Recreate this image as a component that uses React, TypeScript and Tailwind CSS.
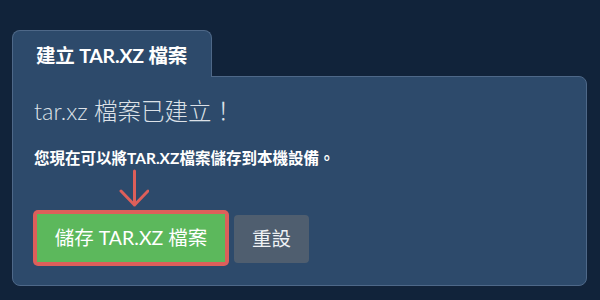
import React from "react";

export default function App() {
  const font = { fontFamily: 'Lato, "Noto Sans CJK TC", sans-serif' };
  return (
    <div
      className="w-[600px] h-[300px] bg-[#11233a] pt-[30px] pl-[12px] pr-[13px] box-border"
      style={font}
    >
      <div className="relative z-10 w-[200px] h-[47px] -mb-px bg-[#2d4a6b] border border-b-0 border-[#4e6888] rounded-t-[8px] flex items-center pl-[23px] pt-[3px]">
        <span className="text-[19.5px] font-bold text-white leading-none tracking-[-0.2px]">
          建立 TAR.XZ 檔案
        </span>
      </div>
      <div className="h-[210px] bg-[#2d4a6b] border border-[#4e6888] rounded-b-[8px] rounded-tr-[8px] pl-[21px] pt-[19px]">
        <h2 className="text-[23.5px] font-light leading-[30px] text-[#dce1e7]">
          tar.xz 檔案已建立！
        </h2>
        <p className="mt-[22px] text-[15.5px] font-bold leading-[20px] text-white">
          您現在可以將TAR.XZ檔案儲存到本機設備。
        </p>
        <div className="h-[42px] pl-[83px]">
          <svg width="32" height="42" viewBox="0 0 32 42">
            <path
              d="M17.5 3 V37 M4 23 L17.5 37 L31 23"
              fill="none"
              stroke="#dd5f5a"
              strokeWidth="3"
              strokeLinecap="round"
              strokeLinejoin="round"
            />
          </svg>
        </div>
        <div className="flex items-center gap-[5px] -ml-px">
          <div className="w-[196px] h-[56px] rounded-[5px] bg-[#dd5f5a] p-[4px]">
            <button className="w-full h-full bg-[#5cb85c] text-white text-[19.5px] flex items-center justify-center">
              儲存 TAR.XZ 檔案
            </button>
          </div>
          <button className="w-[75px] h-[48px] mt-[1px] rounded-[4px] bg-[#4f5e6f] text-[#eef1f4] text-[19.5px] flex items-center justify-center">
            重設
          </button>
        </div>
      </div>
    </div>
  );
}
